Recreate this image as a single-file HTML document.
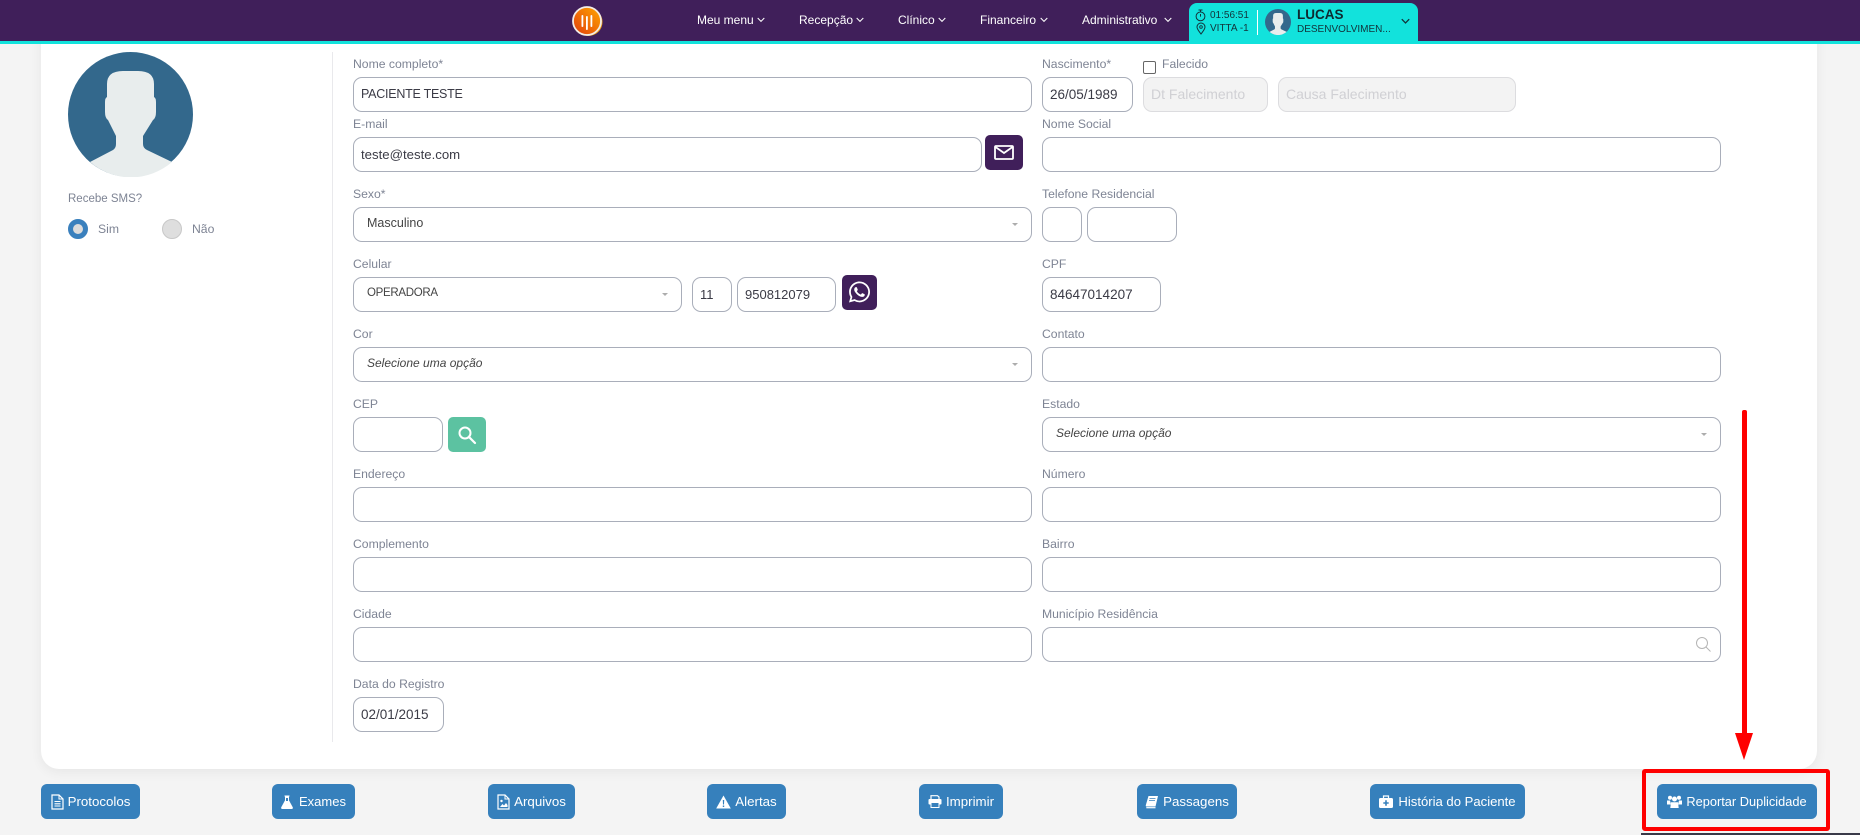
<!DOCTYPE html>
<html lang="pt-BR">
<head>
<meta charset="utf-8">
<title>Paciente</title>
<style>
html,body{margin:0;padding:0;width:1860px;height:835px;overflow:hidden;background:#f4f4f4;font-family:"Liberation Sans",sans-serif}
*{box-sizing:border-box}
.a{position:absolute}
.card{position:absolute;left:41px;top:30px;width:1776px;height:739px;background:#fff;border-radius:0 0 18px 18px;box-shadow:0 3px 12px rgba(0,0,0,.06)}
.bar{position:absolute;left:0;top:0;width:1860px;height:41px;background:#401f5a}
.line{position:absolute;left:0;top:41px;width:1860px;height:3px;background:#12e2dc}
.nav{position:absolute;top:12px;height:16px;line-height:16px;font-size:12px;color:#fff;white-space:nowrap}
.chev{position:absolute;top:17px}
.l{position:absolute;font-size:12.2px;line-height:16px;height:16px;color:#7e8494;white-space:nowrap}
.i{position:absolute;height:35px;border:1px solid #a9aeba;border-radius:9px;background:#fff;font-size:13.5px;color:#3b3b46;padding-left:7px;line-height:33px;white-space:nowrap}
.d{background:#f3f3f3;border-color:#dcdcdf;color:#d0d0d4;font-size:14px}
.s{padding-left:13px;font-size:12.5px;line-height:31px;color:#444}
.s em{font-style:italic;font-size:12px}
.s:after{content:"";position:absolute;right:13px;top:15px;border-left:3.5px solid transparent;border-right:3.5px solid transparent;border-top:3.5px solid #adadad}
.b{position:absolute;top:784px;height:35px;background:#3680bc;border-radius:6px;color:#fff;font-size:13.3px;display:flex;align-items:center;justify-content:center;gap:4px;white-space:nowrap}
.b svg{display:block;flex:none}
</style>
</head>
<body>
<div class="card"></div>
<div class="bar"></div>
<div class="line"></div>

<!-- logo -->
<svg class="a" style="left:571px;top:5px" width="33" height="33" viewBox="0 0 33 33">
<defs><linearGradient id="g" x1="0" y1="1" x2="1" y2="0"><stop offset="0" stop-color="#e23c0c"/><stop offset="1" stop-color="#ffa800"/></linearGradient></defs>
<circle cx="17.500" cy="17" r="14" fill="#f0a010"/>
<circle cx="16" cy="16" r="14" fill="url(#g)" stroke="#f2ece6" stroke-width="1.800"/>
<rect x="10.500" y="10" width="1.800" height="12" rx="0.900" fill="#fff"/>
<rect x="15" y="11" width="1.800" height="14" rx="0.900" fill="#fff"/>
<rect x="19.500" y="10" width="1.800" height="12" rx="0.900" fill="#fff"/>
</svg>

<!-- nav -->
<div class="nav" style="left:697px">Meu menu</div>
<div class="nav" style="left:799px">Recepção</div>
<div class="nav" style="left:898px">Clínico</div>
<div class="nav" style="left:980px">Financeiro</div>
<div class="nav" style="left:1082px">Administrativo</div>
<svg class="chev" style="left:757px" width="8" height="6" viewBox="0 0 8 6"><path d="M.7 1l3.300 3.400L7.300 1" fill="none" stroke="#fff" stroke-width="1"/></svg>
<svg class="chev" style="left:856px" width="8" height="6" viewBox="0 0 8 6"><path d="M.7 1l3.300 3.400L7.300 1" fill="none" stroke="#fff" stroke-width="1"/></svg>
<svg class="chev" style="left:938px" width="8" height="6" viewBox="0 0 8 6"><path d="M.7 1l3.300 3.400L7.300 1" fill="none" stroke="#fff" stroke-width="1"/></svg>
<svg class="chev" style="left:1040px" width="8" height="6" viewBox="0 0 8 6"><path d="M.7 1l3.300 3.400L7.300 1" fill="none" stroke="#fff" stroke-width="1"/></svg>
<svg class="chev" style="left:1164px" width="8" height="6" viewBox="0 0 8 6"><path d="M.7 1l3.300 3.400L7.300 1" fill="none" stroke="#fff" stroke-width="1"/></svg>

<!-- user box -->
<div class="a" style="left:1189px;top:3px;width:229px;height:41px;background:#12e2dc;border-radius:8px 8px 0 0"></div>
<svg class="a" style="left:1195px;top:9px" width="11" height="13" viewBox="0 0 11 13"><circle cx="5.500" cy="7.400" r="4.400" fill="none" stroke="#12333a" stroke-width="1"/><path d="M3.500 1h4M5.500 1v2M5.500 5v2.600" fill="none" stroke="#12333a" stroke-width="1"/></svg>
<svg class="a" style="left:1196px;top:22px" width="10" height="13" viewBox="0 0 10 13"><path d="M5 12C3 9.300 1 7.200 1 5a4 4 0 0 1 8 0c0 2.200-2 4.300-4 7z" fill="none" stroke="#12333a" stroke-width="1"/><circle cx="5" cy="5" r="1.300" fill="none" stroke="#12333a" stroke-width=".9"/></svg>
<div class="a" style="left:1210px;top:9px;font-size:10px;line-height:13px;color:#12333a;white-space:nowrap">01:56:51</div>
<div class="a" style="left:1210px;top:22px;font-size:10px;line-height:13px;color:#12333a;white-space:nowrap">VITTA -1</div>
<div class="a" style="left:1257px;top:10px;width:1px;height:25px;background:#fff"></div>
<svg class="a" style="left:1265px;top:9px" width="26" height="26" viewBox="0 0 125 125"><circle cx="62.500" cy="62.500" r="62.500" fill="#33688c"/><path d="M22 110L45 98Q48 96 48 92V84L40 68Q37 66 37 60V50Q37 46 39 45V32Q39 19 55 19H70Q86 19 86 32V45Q88 46 88 50V60Q88 66 85 68L75 84V92Q75 96 79 98L104 110A62.500 62.500 0 0 1 22 110Z" fill="#e8eded"/></svg>
<div class="a" style="left:1297px;top:7px;font-size:13.500px;font-weight:bold;line-height:16px;color:#0e2a30;white-space:nowrap">LUCAS</div>
<div class="a" style="left:1297px;top:23px;font-size:10px;line-height:13px;color:#12333a;white-space:nowrap">DESENVOLVIMEN...</div>
<svg class="a" style="left:1401px;top:18px" width="9" height="7" viewBox="0 0 9 7"><path d="M.8 1.200L4.500 5 8.200 1.200" fill="none" stroke="#12333a" stroke-width="1.300"/></svg>

<!-- left column -->
<svg class="a" style="left:68px;top:52px" width="125" height="125" viewBox="0 0 125 125"><circle cx="62.500" cy="62.500" r="62.500" fill="#33688c"/><path d="M22 110L45 98Q48 96 48 92V84L40 68Q37 66 37 60V50Q37 46 39 45V32Q39 19 55 19H70Q86 19 86 32V45Q88 46 88 50V60Q88 66 85 68L75 84V92Q75 96 79 98L104 110A62.500 62.500 0 0 1 22 110Z" fill="#e8eded"/></svg>
<div class="l" style="left:68px;top:191px;font-size:11.500px">Recebe SMS?</div>
<div class="a" style="left:68px;top:219px;width:20px;height:20px;border-radius:50%;background:#dcdcdc;border:5px solid #3a80bd"></div>
<div class="l" style="left:98px;top:221px">Sim</div>
<div class="a" style="left:162px;top:219px;width:20px;height:20px;border-radius:50%;background:#dedede;border:1px solid #c8c8c8"></div>
<div class="l" style="left:192px;top:221px">Não</div>
<div class="a" style="left:332px;top:52px;width:1px;height:690px;background:#e9e9ec"></div>

<!-- form left -->
<div class="l" style="left:353px;top:56px">Nome completo*</div>
<div class="i" style="left:353px;top:77px;width:679px;font-size:12.500px;letter-spacing:-.25px">PACIENTE TESTE</div>
<div class="l" style="left:353px;top:116px">E-mail</div>
<div class="i" style="left:353px;top:137px;width:629px;font-size:13.200px">teste@teste.com</div>
<div class="a" style="left:985px;top:135px;width:38px;height:35px;background:#401f5a;border-radius:5px"></div>
<svg class="a" style="left:994px;top:145px" width="20" height="15" viewBox="0 0 20 15"><rect x="1" y="1" width="18" height="13" rx="1" fill="none" stroke="#fff" stroke-width="1.800"/><path d="M1.500 2L10 8l8.500-6" fill="none" stroke="#fff" stroke-width="1.800"/></svg>
<div class="l" style="left:353px;top:186px">Sexo*</div>
<div class="i s" style="left:353px;top:207px;width:679px">Masculino</div>
<div class="l" style="left:353px;top:256px">Celular</div>
<div class="i s" style="left:353px;top:277px;width:329px;font-size:11.500px;letter-spacing:-.3px">OPERADORA</div>
<div class="i" style="left:692px;top:277px;width:40px;font-size:13px">11</div>
<div class="i" style="left:737px;top:277px;width:99px;font-size:13px">950812079</div>
<div class="a" style="left:842px;top:275px;width:35px;height:35px;background:#401f5a;border-radius:5px"></div>
<svg class="a" style="left:849px;top:280px" width="21" height="24" viewBox="0 0 448 512"><path fill="#fff" d="M380.900 97.100C339 55.100 283.200 32 223.900 32c-122.400 0-222 99.600-222 222 0 39.100 10.200 77.300 29.600 111L0 480l117.700-30.900c32.400 17.700 68.900 27 106.100 27h.1c122.300 0 224.100-99.600 224.100-222 0-59.300-25.200-115-67.100-157zm-157 341.600c-33.200 0-65.700-8.900-94-25.700l-6.700-4-69.800 18.300L72 359.200l-4.400-7c-18.500-29.400-28.200-63.300-28.200-98.200 0-101.700 82.800-184.500 184.600-184.500 49.300 0 95.600 19.200 130.400 54.100 34.800 34.900 56.200 81.200 56.100 130.500 0 101.800-84.900 184.600-186.600 184.600zm101.200-138.200c-5.500-2.800-32.800-16.200-37.900-18-5.100-1.900-8.800-2.800-12.500 2.800-3.700 5.600-14.300 18-17.600 21.800-3.200 3.700-6.500 4.200-12 1.400-32.600-16.300-54-29.100-75.500-66-5.700-9.800 5.700-9.100 16.300-30.300 1.800-3.700.9-6.900-.5-9.700-1.400-2.800-12.500-30.100-17.100-41.200-4.500-10.800-9.100-9.300-12.500-9.500-3.200-.2-6.900-.2-10.600-.2-3.700 0-9.700 1.400-14.800 6.900-5.100 5.600-19.400 19-19.400 46.300 0 27.300 19.900 53.700 22.600 57.400 2.800 3.700 39.100 59.700 94.800 83.800 35.200 15.200 49 16.500 66.600 13.900 10.700-1.600 32.800-13.400 37.400-26.400 4.600-13 4.600-24.100 3.200-26.400-1.300-2.500-5-3.900-10.500-6.600z"/></svg>
<div class="l" style="left:353px;top:326px">Cor</div>
<div class="i s" style="left:353px;top:347px;width:679px"><em>Selecione uma opção</em></div>
<div class="l" style="left:353px;top:396px">CEP</div>
<div class="i" style="left:353px;top:417px;width:90px"></div>
<div class="a" style="left:448px;top:417px;width:38px;height:35px;background:#5cc2a1;border-radius:5px"></div>
<svg class="a" style="left:457px;top:425px" width="20" height="20" viewBox="0 0 20 20"><circle cx="8" cy="8" r="5.500" fill="none" stroke="#fff" stroke-width="2"/><path d="M12 12l6 6" stroke="#fff" stroke-width="2.200" stroke-linecap="round"/></svg>
<div class="l" style="left:353px;top:466px">Endereço</div>
<div class="i" style="left:353px;top:487px;width:679px"></div>
<div class="l" style="left:353px;top:536px">Complemento</div>
<div class="i" style="left:353px;top:557px;width:679px"></div>
<div class="l" style="left:353px;top:606px">Cidade</div>
<div class="i" style="left:353px;top:627px;width:679px"></div>
<div class="l" style="left:353px;top:676px">Data do Registro</div>
<div class="i" style="left:353px;top:697px;width:91px">02/01/2015</div>

<!-- form right -->
<div class="l" style="left:1042px;top:56px">Nascimento*</div>
<div class="i" style="left:1042px;top:77px;width:91px">26/05/1989</div>
<div class="a" style="left:1143px;top:61px;width:13px;height:13px;border:1px solid #666;border-radius:2px;background:#fff"></div>
<div class="l" style="left:1162px;top:56px">Falecido</div>
<div class="i d" style="left:1143px;top:77px;width:125px">Dt Falecimento</div>
<div class="i d" style="left:1278px;top:77px;width:238px">Causa Falecimento</div>
<div class="l" style="left:1042px;top:116px">Nome Social</div>
<div class="i" style="left:1042px;top:137px;width:679px"></div>
<div class="l" style="left:1042px;top:186px">Telefone Residencial</div>
<div class="i" style="left:1042px;top:207px;width:40px"></div>
<div class="i" style="left:1087px;top:207px;width:90px"></div>
<div class="l" style="left:1042px;top:256px">CPF</div>
<div class="i" style="left:1042px;top:277px;width:119px">84647014207</div>
<div class="l" style="left:1042px;top:326px">Contato</div>
<div class="i" style="left:1042px;top:347px;width:679px"></div>
<div class="l" style="left:1042px;top:396px">Estado</div>
<div class="i s" style="left:1042px;top:417px;width:679px"><em>Selecione uma opção</em></div>
<div class="l" style="left:1042px;top:466px">Número</div>
<div class="i" style="left:1042px;top:487px;width:679px"></div>
<div class="l" style="left:1042px;top:536px">Bairro</div>
<div class="i" style="left:1042px;top:557px;width:679px"></div>
<div class="l" style="left:1042px;top:606px">Município Residência</div>
<div class="i" style="left:1042px;top:627px;width:679px"></div>
<svg class="a" style="left:1695px;top:636px" width="17" height="17" viewBox="0 0 17 17"><circle cx="7" cy="7" r="5.500" fill="none" stroke="#b5b5b5" stroke-width="1"/><path d="M11 11l4.500 4.500" stroke="#b5b5b5" stroke-width="1"/></svg>

<!-- buttons -->
<div class="b" style="left:41px;width:99px">
<svg width="13" height="16" viewBox="0 0 13 16"><path d="M1 1h7l4 4v10H1z" fill="none" stroke="#fff" stroke-width="1.200"/><path d="M8 1v4h4" fill="none" stroke="#fff" stroke-width="1"/><path d="M3.500 7.500h6M3.500 9.800h6M3.500 12h6" stroke="#fff" stroke-width="1.100"/></svg>Protocolos</div>
<div class="b" style="left:272px;width:83px;gap:6px;font-size:13px">
<svg width="12" height="14" viewBox="0 0 12 14"><path d="M3.500 1h5M4.500 1v4.500L.7 12.500Q.3 13.500 1.500 13.500h9q1.200 0 .8-1L7.500 5.500V1" fill="#fff" stroke="#fff" stroke-width="1"/><path d="M5 3h2v3H5z" fill="#3680bc"/></svg>Exames</div>
<div class="b" style="left:488px;width:87px">
<svg width="13" height="16" viewBox="0 0 13 16"><path d="M1 1h7l4 4v10H1z" fill="none" stroke="#fff" stroke-width="1.200"/><path d="M8 1v4h4" fill="none" stroke="#fff" stroke-width="1"/><path d="M3 13l2.500-3 1.500 1.500 2-2.500 1.500 2v2z" fill="#fff"/><circle cx="4.500" cy="7" r="1.200" fill="#fff"/></svg>Arquivos</div>
<div class="b" style="left:707px;width:79px">
<svg width="15" height="14" viewBox="0 0 15 14"><path d="M7.500.5L14.800 13.500H.2z" fill="#fff"/><path d="M6.800 5h1.400l-.2 4.500H7zM6.800 10.500h1.400v1.500H6.800z" fill="#3680bc"/></svg>Alertas</div>
<div class="b" style="left:919px;width:84px">
<svg width="14" height="13" viewBox="0 0 14 13"><path d="M3 4V.7h6.500L11 2v2" fill="none" stroke="#fff" stroke-width="1.200"/><rect x=".5" y="4" width="13" height="5.500" rx="1" fill="#fff"/><rect x="3" y="7.500" width="8" height="5" fill="#3680bc" stroke="#fff" stroke-width="1"/></svg>Imprimir</div>
<div class="b" style="left:1137px;width:100px">
<svg width="14" height="14" viewBox="0 0 14 14"><path d="M3.500 1H13L10.500 11.500H1.500Q.3 11.500 1 9.500z" fill="#fff"/><path d="M1.300 12.700H10.500" stroke="#fff" stroke-width="1.200"/><path d="M4.500 3.500h6M4 5.500h6" stroke="#3680bc" stroke-width=".8"/></svg>Passagens</div>
<div class="b" style="left:1370px;width:155px;gap:5px;font-size:13.100px">
<svg width="14" height="13" viewBox="0 0 14 13"><path d="M4.500 3V1h5v2" fill="none" stroke="#fff" stroke-width="1.200"/><rect x="0" y="3" width="14" height="10" rx="1.500" fill="#fff"/><path d="M7 5.200v5.500M4.300 8h5.400" stroke="#3680bc" stroke-width="1.600"/></svg>História do Paciente</div>
<div class="b" style="left:1657px;width:160px;font-size:12.800px">
<svg width="15" height="13" viewBox="0 0 15 13"><circle cx="3" cy="2.800" r="2" fill="#fff"/><circle cx="12" cy="2.800" r="2" fill="#fff"/><circle cx="7.500" cy="4" r="2.500" fill="#fff"/><path d="M0 5.500h3l1 4H0zM15 5.500h-3l-1 4h4z" fill="#fff"/><path d="M4 7.200h7l.7 5.800H3.300z" fill="#fff"/></svg>Reportar Duplicidade</div>

<!-- annotations -->
<div class="a" style="left:1642px;top:769px;width:188px;height:62px;border:4px solid #fe0000;border-radius:3px"></div>
<div class="a" style="left:1742px;top:410px;width:4.500px;height:326px;background:#fe0000;border-radius:2px"></div>
<svg class="a" style="left:1735px;top:733px" width="18" height="27" viewBox="0 0 18 27"><path d="M0 0H18L9 27z" fill="#fe0000"/></svg>
<div class="a" style="left:1641px;top:833px;width:219px;height:2px;background:#3a3a48"></div>
</body>
</html>
